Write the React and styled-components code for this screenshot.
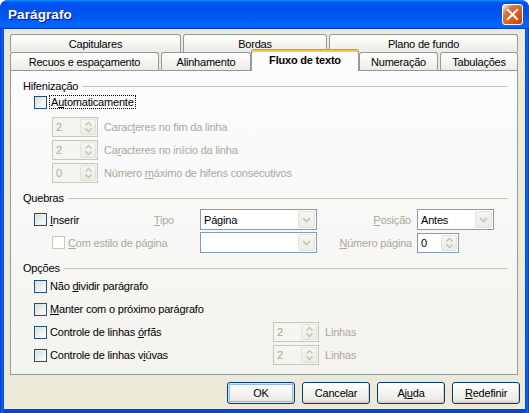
import styled, { createGlobalStyle, css } from 'styled-components'

const GlobalStyle = createGlobalStyle`
  html, body {
    margin: 0;
    padding: 0;
    background: #ffffff;
  }
  body {
    font-family: "Liberation Sans", Arial, sans-serif;
    font-size: 11px;
    letter-spacing: -0.2px;
    color: #000;
  }
`

const DISABLED = '#aca899'

function ChevronDown({ color = '#c3c2b8' }) {
  return (
    <svg width="9" height="6" viewBox="0 0 9 6">
      <path d="M1 1 L4.5 4.5 L8 1" fill="none" stroke={color} strokeWidth="1.6" />
    </svg>
  )
}

function SpinArrows({ color = '#c3c2b8' }) {
  return (
    <svg width="9" height="12" viewBox="0 0 9 12">
      <path d="M1.5 4.5 L4.5 1.5 L7.5 4.5" fill="none" stroke={color} strokeWidth="1.4" />
      <path d="M1.5 7.5 L4.5 10.5 L7.5 7.5" fill="none" stroke={color} strokeWidth="1.4" />
    </svg>
  )
}

function Paragrafo() {
  return (
    <Window>
      <TitleBar>
        <Title>Parágrafo</Title>
        <CloseButton>
          <svg width="13" height="13" viewBox="0 0 13 13">
            <path d="M2 2 L11 11 M11 2 L2 11" stroke="#fff" strokeWidth="2.2" strokeLinecap="square" />
          </svg>
        </CloseButton>
      </TitleBar>

      <Body>
        <TabRow>
          <Tab $w={171}>Capitulares</Tab>
          <Tab $w={144}>Bordas</Tab>
          <Tab $w={189}>Plano de fundo</Tab>
        </TabRow>
        <TabRow $front>
          <Tab $w={149}>Recuos e espaçamento</Tab>
          <Tab $w={90}>Alinhamento</Tab>
          <Tab $w={104} $active>Fluxo de texto</Tab>
          <Tab $w={79}>Numeração</Tab>
          <Tab $w={78}>Tabulações</Tab>
        </TabRow>

        <Panel>
          <Section>
            <GroupHeader>
              <span>Hifenização</span>
              <Rule />
            </GroupHeader>
            <CheckRow $top={2}>
              <Checkbox />
              <FocusLabel>A<Mn>u</Mn>tomaticamente</FocusLabel>
            </CheckRow>
            <SpinList>
              <SpinRow>
                <SpinField $w={46} $disabled>
                  <FieldValue $disabled>2</FieldValue>
                  <SpinButton><SpinArrows /></SpinButton>
                </SpinField>
                <Label $disabled>Carac<Mn>t</Mn>eres no fim da linha</Label>
              </SpinRow>
              <SpinRow>
                <SpinField $w={46} $disabled>
                  <FieldValue $disabled>2</FieldValue>
                  <SpinButton><SpinArrows /></SpinButton>
                </SpinField>
                <Label $disabled>Ca<Mn>r</Mn>acteres no início da linha</Label>
              </SpinRow>
              <SpinRow>
                <SpinField $w={46} $disabled>
                  <FieldValue $disabled>0</FieldValue>
                  <SpinButton><SpinArrows /></SpinButton>
                </SpinField>
                <Label $disabled>Número <Mn>m</Mn>áximo de hifens consecutivos</Label>
              </SpinRow>
            </SpinList>
          </Section>

          <Section>
            <GroupHeader>
              <span>Quebras</span>
              <Rule />
            </GroupHeader>
            <BreakGrid>
              <CheckCell>
                <Checkbox />
                <Label><Mn>I</Mn>nserir</Label>
              </CheckCell>
              <RightLabel $pad={26} $disabled><Mn>T</Mn>ipo</RightLabel>
              <Select $w={117}>
                <FieldValue>Página</FieldValue>
                <DropButton><ChevronDown /></DropButton>
              </Select>
              <RightLabel $pad={6} $disabled><Mn>P</Mn>osição</RightLabel>
              <Select $w={77}>
                <FieldValue>Antes</FieldValue>
                <DropButton><ChevronDown /></DropButton>
              </Select>

              <CheckCell $indent={18} $span={2}>
                <Checkbox $disabled />
                <Label $disabled><Mn>C</Mn>om estilo de página</Label>
              </CheckCell>
              <Select $w={117}>
                <FieldValue />
                <DropButton><ChevronDown /></DropButton>
              </Select>
              <RightLabel $pad={5} $disabled><Mn>N</Mn>úmero página</RightLabel>
              <SpinField $w={42}>
                <FieldValue>0</FieldValue>
                <SpinButton><SpinArrows /></SpinButton>
              </SpinField>
            </BreakGrid>
          </Section>

          <Section>
            <GroupHeader>
              <span>Opções</span>
              <Rule />
            </GroupHeader>
            <OptionList>
              <OptionRow>
                <OptionLead>
                  <Checkbox />
                  <Label>Não <Mn>d</Mn>ividir parágrafo</Label>
                </OptionLead>
              </OptionRow>
              <OptionRow>
                <OptionLead>
                  <Checkbox />
                  <Label><Mn>M</Mn>anter com o próximo parágrafo</Label>
                </OptionLead>
              </OptionRow>
              <OptionRow>
                <OptionLead>
                  <Checkbox />
                  <Label>Controle de linhas <Mn>ó</Mn>rfãs</Label>
                </OptionLead>
                <SpinField $w={46} $disabled>
                  <FieldValue $disabled>2</FieldValue>
                  <SpinButton><SpinArrows /></SpinButton>
                </SpinField>
                <Label $disabled>Linhas</Label>
              </OptionRow>
              <OptionRow>
                <OptionLead>
                  <Checkbox />
                  <Label>Controle de linhas v<Mn>i</Mn>úvas</Label>
                </OptionLead>
                <SpinField $w={46} $disabled>
                  <FieldValue $disabled>2</FieldValue>
                  <SpinButton><SpinArrows /></SpinButton>
                </SpinField>
                <Label $disabled>Linhas</Label>
              </OptionRow>
            </OptionList>
          </Section>
        </Panel>

        <ButtonRow>
          <Button $default>OK</Button>
          <Button>Cancelar</Button>
          <Button>Aj<Mn>u</Mn>da</Button>
          <Button><Mn>R</Mn>edefinir</Button>
        </ButtonRow>
      </Body>
    </Window>
  )
}

const Window = styled.div`
  width: 529px;
  height: 413px;
  display: flex;
  flex-direction: column;
  box-sizing: border-box;
  border-radius: 8px 8px 0 0;
  overflow: hidden;
  background: linear-gradient(to right, #0026b8 0, #0a5de8 1px, #0a5de8 3px, #0046d8 4px, #0046d8 calc(100% - 4px), #0a5de8 calc(100% - 3px), #0a5de8 calc(100% - 1px), #0026b8 100%);
`

const TitleBar = styled.div`
  height: 29px;
  flex: none;
  display: flex;
  align-items: center;
  justify-content: space-between;
  padding: 0 6px 0 8px;
  background: linear-gradient(180deg, #0997ff, #0053ee 8%, #0050ee 40%, #0066ff 88%, #0066ff 93%, #005bff 95%, #003dd7 96%, #003dd7);
`

const Title = styled.div`
  color: #fff;
  font-weight: bold;
  font-size: 13.5px;
  letter-spacing: 0.1px;
  text-shadow: 1px 1px 0 #0f1089;
`

const CloseButton = styled.div`
  width: 21px;
  height: 21px;
  box-sizing: border-box;
  border: 1px solid #fff;
  border-radius: 3px;
  display: flex;
  align-items: center;
  justify-content: center;
  background: radial-gradient(circle at 90% 90%, #cc4600 0, #dc6527 55%, #cd7546 70%, #ffccb2 90%, #fff 100%);
`

const Body = styled.div`
  flex: 1;
  margin: 0 4px 4px;
  background: #ece9d8;
  display: flex;
  flex-direction: column;
  padding: 5px 7px 0 6px;
  min-height: 0;
`

const TabRow = styled.div`
  display: flex;
  gap: 2px;
  height: 18px;
  align-items: flex-end;
  flex: none;
  position: relative;
  z-index: ${({ $front }) => ($front ? 2 : 1)};
`

const Tab = styled.div`
  width: ${({ $w }) => $w}px;
  height: 18px;
  box-sizing: border-box;
  border: 1px solid #919b9c;
  border-bottom: none;
  border-radius: 3px 3px 0 0;
  background: linear-gradient(#ffffff, #f4f3ee 60%, #ecebe6);
  display: flex;
  align-items: center;
  justify-content: center;
  padding-top: 1px;
  white-space: nowrap;

  ${({ $active }) =>
    $active &&
    css`
      position: relative;
      z-index: 3;
      height: 22px;
      width: ${({ $w }) => $w + 4}px;
      margin: 0 -2px -1px;
      padding-top: 0;
      padding-bottom: 2px;
      background: #fcfcfe;
      border-top: 1px solid #e68b2c;
      box-shadow: inset 0 2px 0 #ffc83c;
      font-weight: bold;
    `}
`

const Panel = styled.div`
  flex: 1;
  min-height: 0;
  box-sizing: border-box;
  border: 1px solid #919b9c;
  background: linear-gradient(#fcfcfe, #f4f3ee);
  padding: 8px 9px 0 12px;
  display: flex;
  flex-direction: column;
  gap: 8px;
`

const Section = styled.div`
  display: flex;
  flex-direction: column;
`

const GroupHeader = styled.div`
  height: 14px;
  display: flex;
  align-items: center;
  gap: 4px;
  white-space: nowrap;
`

const Rule = styled.div`
  flex: 1;
  height: 1px;
  background: #c5c4ba;
`

const Mn = styled.span`
  text-decoration: underline;
`

const Label = styled.span`
  white-space: nowrap;
  color: ${({ $disabled }) => ($disabled ? DISABLED : '#000')};
`

const RightLabel = styled(Label)`
  text-align: right;
  padding-right: ${({ $pad }) => $pad}px;
`

const Checkbox = styled.span`
  width: 13px;
  height: 13px;
  box-sizing: border-box;
  flex: none;
  border: 1px solid ${({ $disabled }) => ($disabled ? '#cac8bb' : '#1c5180')};
  background: ${({ $disabled }) =>
    $disabled ? '#ffffff' : 'linear-gradient(135deg, #dcdcd7, #ffffff)'};
`

const CheckRow = styled.div`
  height: 14px;
  margin-top: ${({ $top }) => $top}px;
  padding-left: 11px;
  display: flex;
  align-items: center;
  gap: 2px;
`

const FocusLabel = styled.span`
  border: 1px dotted #000;
  padding: 0 1px 0 1px;
  line-height: 12px;
  white-space: nowrap;
`

const SpinList = styled.div`
  margin-top: 8px;
  padding-left: 29px;
  display: flex;
  flex-direction: column;
  gap: 3px;
`

const SpinRow = styled.div`
  height: 20px;
  display: flex;
  align-items: center;
  gap: 6px;
`

const fieldBox = css`
  width: ${({ $w }) => $w}px;
  box-sizing: border-box;
  flex: none;
  display: flex;
  align-items: center;
  padding: 1px;
  border: 1px solid ${({ $disabled }) => ($disabled ? '#c9c7ba' : '#7f9db9')};
  background: ${({ $disabled }) => ($disabled ? '#f5f4ef' : '#ffffff')};
`

const SpinField = styled.div`
  ${fieldBox}
  height: 20px;
`

const Select = styled.div`
  ${fieldBox}
  height: 21px;
`

const FieldValue = styled.span`
  flex: 1;
  padding-left: 2px;
  white-space: nowrap;
  color: ${({ $disabled }) => ($disabled ? DISABLED : '#000')};
`

const SpinButton = styled.span`
  width: 16px;
  height: 16px;
  box-sizing: border-box;
  border: 1px solid #e3e1d8;
  border-radius: 2px;
  background: linear-gradient(#f7f6f2, #ecebe4);
  display: flex;
  align-items: center;
  justify-content: center;
`

const DropButton = styled(SpinButton)`
  height: 17px;
  width: 17px;
`

const BreakGrid = styled.div`
  margin-top: 4px;
  margin-left: 11px;
  display: grid;
  grid-template-columns: 116px 50px 117px 100px 77px;
  grid-auto-rows: 21px;
  row-gap: 2px;
  align-items: center;
`

const CheckCell = styled.div`
  display: flex;
  align-items: center;
  gap: 3px;
  padding-left: ${({ $indent = 0 }) => $indent}px;
  grid-column: span ${({ $span = 1 }) => $span};
`

const OptionList = styled.div`
  margin-top: 1px;
  padding-left: 11px;
  display: flex;
  flex-direction: column;
  gap: 3px;
`

const OptionRow = styled.div`
  height: 20px;
  display: flex;
  align-items: center;
  gap: 6px;
`

const OptionLead = styled.div`
  width: 233px;
  display: flex;
  align-items: center;
  gap: 3px;
`

const ButtonRow = styled.div`
  flex: none;
  display: flex;
  justify-content: flex-end;
  gap: 7px;
  padding: 7px 0 5px;
  margin-right: -2px;
`

const Button = styled.div`
  width: 68px;
  height: 22px;
  box-sizing: border-box;
  border: 1px solid #003c74;
  border-radius: 3px;
  display: flex;
  align-items: center;
  justify-content: center;
  background: linear-gradient(#ffffff, #f3f3ef 50%, #ecebe6 85%, #d6d0c5);
  box-shadow: ${({ $default }) =>
    $default
      ? 'inset 0 0 0 1px #cee7ff, inset 0 0 0 2px #98b8ea'
      : 'inset -1px -1px 0 #d8d2c6'};
`

export default function App() {
  return (
    <>
      <GlobalStyle />
      <Paragrafo />
    </>
  )
}
